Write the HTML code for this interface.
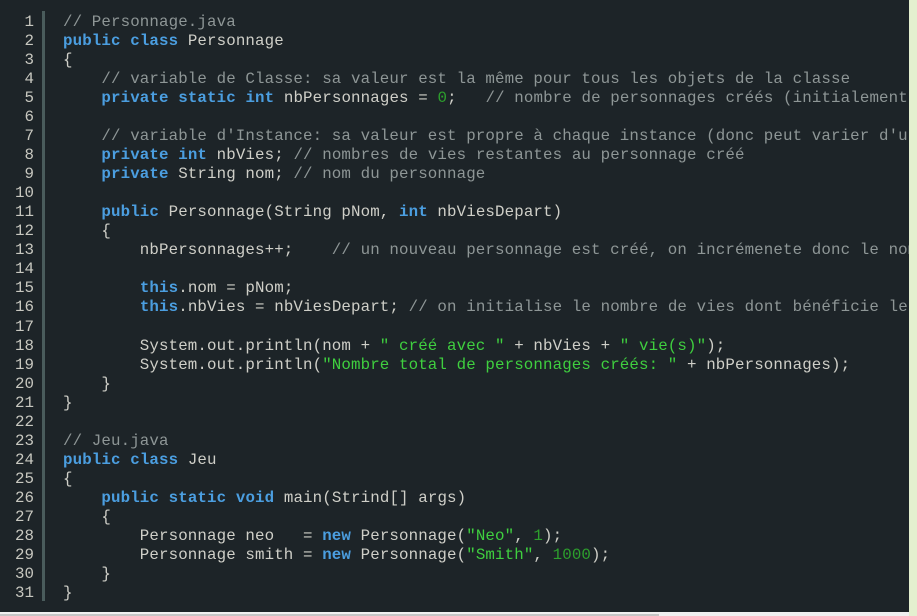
<!DOCTYPE html>
<html><head><meta charset="utf-8">
<style>
html,body{margin:0;padding:0;}
body{width:917px;height:616px;overflow:hidden;background:#1d2428;position:relative;font-family:"Liberation Mono","DejaVu Sans Mono",monospace;}
#nums{position:absolute;left:0;top:13px;width:34px;text-align:right;color:#c8c8c0;font-size:15.8px;line-height:19.03px;white-space:pre;}
#bar{position:absolute;left:42px;top:11px;width:3px;height:590px;background:#4a5c5c;}
#code{position:absolute;left:63px;top:13px;width:846px;height:598px;overflow:hidden;color:#cfcfc8;font-size:15.8px;line-height:19.03px;white-space:pre;letter-spacing:0.12px;}
.k{color:#4b9ee0;font-weight:bold;}
.c{color:#8e9696;}
.s{color:#3fcf3f;}
.n{color:#2da02d;}
#right{position:absolute;left:909px;top:0;width:8px;height:616px;background:#e4f0cf;}
#bottom{position:absolute;left:0;top:612px;width:909px;height:4px;background:#f0f0f0;}
#thumb{position:absolute;left:0;top:614px;width:659px;height:2px;background:#c6c6c6;}
</style></head><body>
<div id="nums">1
2
3
4
5
6
7
8
9
10
11
12
13
14
15
16
17
18
19
20
21
22
23
24
25
26
27
28
29
30
31</div>
<div id="bar"></div>
<div id="code"><span class="c">// Personnage.java</span>
<span class="k">public</span> <span class="k">class</span> Personnage
{
    <span class="c">// variable de Classe: sa valeur est la même pour tous les objets de la classe</span>
    <span class="k">private</span> <span class="k">static</span> <span class="k">int</span> nbPersonnages = <span class="n">0</span>;   <span class="c">// nombre de personnages créés (initialement 0)</span>

    <span class="c">// variable d'Instance: sa valeur est propre à chaque instance (donc peut varier d'une instance à l'autre)</span>
    <span class="k">private</span> <span class="k">int</span> nbVies; <span class="c">// nombres de vies restantes au personnage créé</span>
    <span class="k">private</span> String nom; <span class="c">// nom du personnage</span>

    <span class="k">public</span> Personnage(String pNom, <span class="k">int</span> nbViesDepart)
    {
        nbPersonnages++;    <span class="c">// un nouveau personnage est créé, on incrémenete donc le nombre</span>

        <span class="k">this</span>.nom = pNom;
        <span class="k">this</span>.nbVies = nbViesDepart; <span class="c">// on initialise le nombre de vies dont bénéficie le perso</span>

        System.out.println(nom + <span class="s">" créé avec "</span> + nbVies + <span class="s">" vie(s)"</span>);
        System.out.println(<span class="s">"Nombre total de personnages créés: "</span> + nbPersonnages);
    }
}

<span class="c">// Jeu.java</span>
<span class="k">public</span> <span class="k">class</span> Jeu
{
    <span class="k">public</span> <span class="k">static</span> <span class="k">void</span> main(Strind[] args)
    {
        Personnage neo   = <span class="k">new</span> Personnage(<span class="s">"Neo"</span>, <span class="n">1</span>);
        Personnage smith = <span class="k">new</span> Personnage(<span class="s">"Smith"</span>, <span class="n">1000</span>);
    }
}</div>
<div id="right"></div>
<div id="bottom"></div>
<div id="thumb"></div>
</body></html>
